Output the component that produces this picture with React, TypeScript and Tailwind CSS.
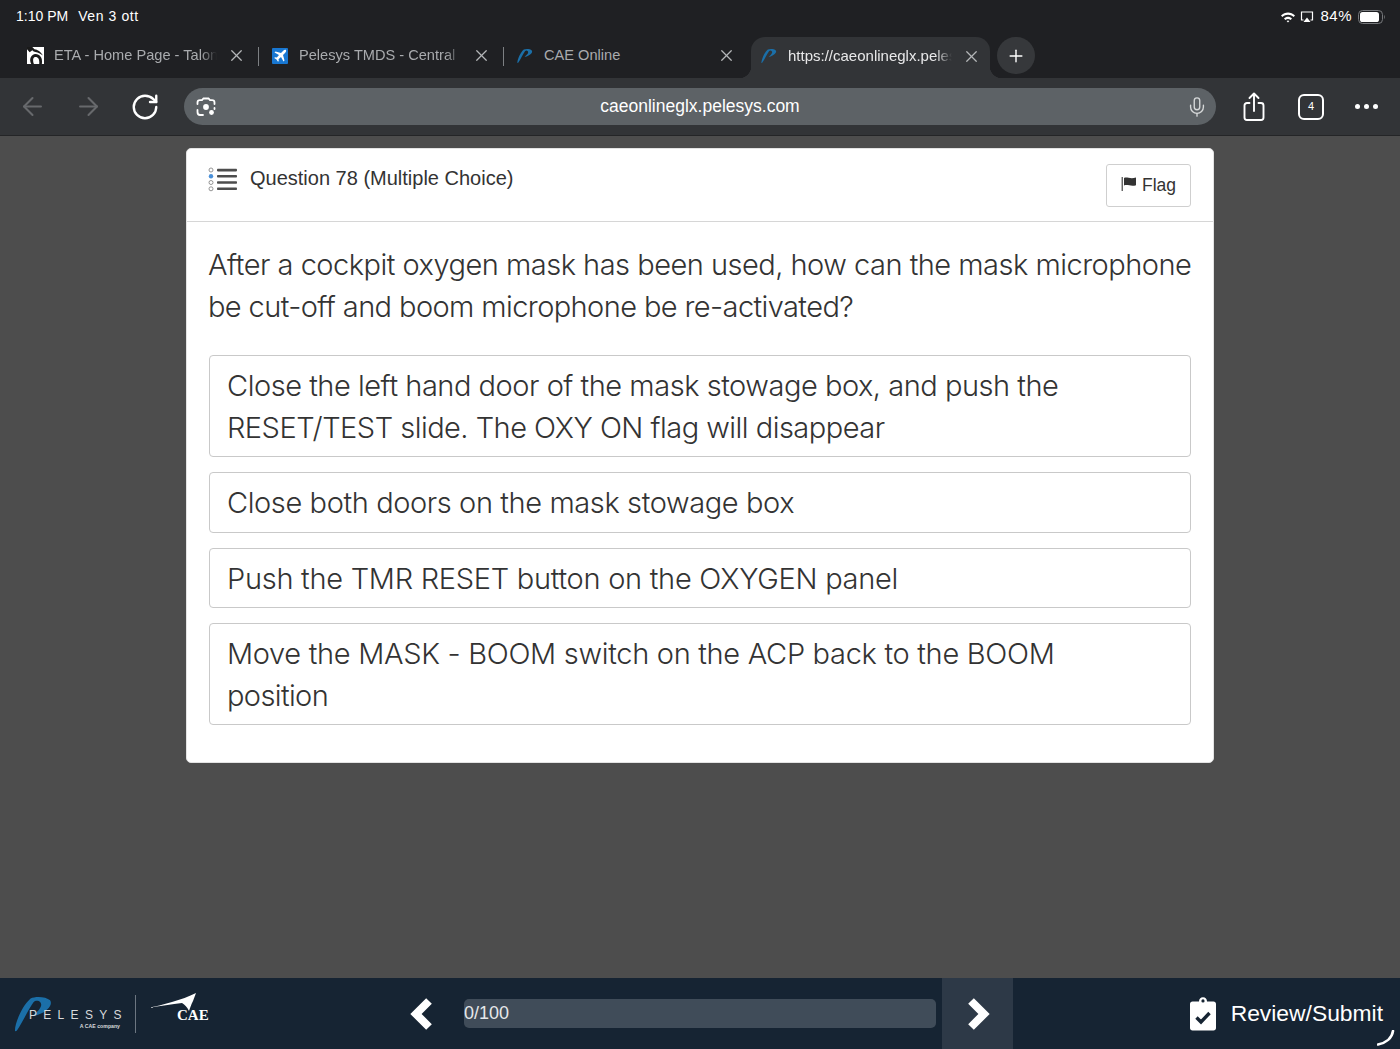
import { ArrowLeft, ArrowRight, Mic, Plus, RotateCw, X } from "lucide-react";

const sans = "font-['Liberation_Sans',Arial,sans-serif]";

function PelesysMark({ className }: { className?: string }) {
  return (
    <svg viewBox="0 0 40 36" className={className}>
      <path d="M1 35 C1 27 8 10 17 2 C22 -0.5 33 0 37 4 C40 8 35 15 24 19 C22 20 20 20 19 20 C25 15 30 10 27 6 C25 4 22 4 20 6 C15 13 9 26 3 35 C2 36 1 36 1 35 Z" fill="#1b6fa8" />
    </svg>
  );
}

function EtaIcon() {
  return (
    <svg viewBox="0 0 16 16" className="w-[17px] h-[17px] shrink-0">
      <rect width="16" height="16" fill="#fff" />
      <path d="M0 0 H5 L7 2 C10 2.5 13 4 15 8 L12 6 C9 4.5 6.5 5 5 3 L2.5 5 L0 2 Z" fill="#1a1a1a" />
      <path d="M4 16 C1.5 11 4 7 8 6.5 C12 6.5 15 10 14 16 H11.5 C12 12 10.5 9.5 8 9.5 C6 9.5 5 12 6.5 16 Z" fill="#1a1a1a" />
    </svg>
  );
}

function PlaneIcon() {
  return (
    <svg viewBox="0 0 16 16" className="w-4 h-4 shrink-0">
      <rect width="16" height="16" rx="1" fill="#1877d2" />
      <path d="M14 2 C13 1.6 12 2 11 3 L9 5 L3.5 3.5 L2.5 4.5 L7 7 L4.8 9.5 L3 9.2 L2.2 10 L4.5 11.5 L6 13.8 L6.8 13 L6.5 11.2 L9 9 L11.5 13.5 L12.5 12.5 L11 7 L13 5 C14 4 14.4 3 14 2 Z" fill="#fff" />
    </svg>
  );
}

function Tab({
  icon,
  title,
  fade,
  divider,
}: {
  icon: React.ReactNode;
  title: string;
  fade?: boolean;
  divider?: boolean;
}) {
  return (
    <div className="flex items-center w-[245px] h-[41px] pb-[3px] shrink-0">
      <div className="flex items-center flex-1 pl-[10px] min-w-0">
        <span className="w-[16px] flex justify-center shrink-0">{icon}</span>
        <span
          className={`ml-[11px] w-[163px] overflow-hidden whitespace-nowrap text-[14.6px] text-[#a9abae] ${fade ? "[mask-image:linear-gradient(to_right,black_90%,transparent)]" : ""}`}
        >
          {title}
        </span>
        <X className="w-[19px] h-[19px] ml-[10px] text-[#b4b6b8] shrink-0" strokeWidth={1.6} />
      </div>
      {divider && <div className="w-px h-[19px] bg-[#7d8083] mr-[3px] ml-[11px] shrink-0" />}
    </div>
  );
}

function Answer({ children }: { children: React.ReactNode }) {
  return (
    <div className="border border-[#c9c9c9] rounded-[4px] pl-[17px] pr-[18px] pt-[9px] pb-[8px] font-['Inter',sans-serif] text-[29px] leading-[41.5px] text-[#333] font-light whitespace-nowrap">
      {children}
    </div>
  );
}

export default function App() {
  return (
    <div className={`h-[1049px] w-[1400px] flex flex-col overflow-hidden bg-[#4d4d4d] ${sans}`}>
      {/* Status bar */}
      <div className="h-[37px] bg-[#1f2023] flex items-center justify-between pl-[16px] pr-[14px] pb-[4px] text-white text-[14px] shrink-0">
        <div className="flex gap-[10px]">
          <span>1:10 PM</span>
          <span className="tracking-[0.6px]">Ven 3 ott</span>
        </div>
        <div className="flex items-center">
          <svg viewBox="0 0 16 12" className="w-[16px] h-[12px]">
            <path d="M1 4.5 C5 0.6 11 0.6 15 4.5 L13.6 6 C10.4 3 5.6 3 2.4 6 Z M4 7.4 C6.4 5.3 9.6 5.3 12 7.4 L10.6 8.9 C9 7.6 7 7.6 5.4 8.9 Z M6.6 10 C7.5 9.3 8.5 9.3 9.4 10 L8 11.6 Z" fill="#fff" />
          </svg>
          <svg viewBox="0 0 14 12" className="w-[14px] h-[12px] ml-[4px]">
            <path d="M3.5 9 H1.5 V1 H12.5 V9 H10.5" fill="none" stroke="#fff" strokeWidth="1.2" />
            <path d="M7 6.5 L10.5 11 H3.5 Z" fill="#fff" />
          </svg>
          <span className="ml-[6px] text-[15px] tracking-[0.5px]">84%</span>
          <svg viewBox="0 0 28 14" className="w-[28px] h-[14px] ml-[6px]">
            <rect x="0.5" y="0.5" width="24" height="13" rx="4" fill="none" stroke="#77797c" />
            <rect x="2" y="2" width="19" height="10" rx="2.6" fill="#fff" />
            <path d="M26 5 C27 5.4 27 8.6 26 9 Z" fill="#77797c" />
          </svg>
        </div>
      </div>

      {/* Tab strip */}
      <div className="h-[41px] bg-[#1f2023] flex items-start pl-[17px] shrink-0">
        <Tab icon={<EtaIcon />} title="ETA - Home Page - Talon" fade divider />
        <Tab icon={<PlaneIcon />} title="Pelesys TMDS - Central" fade divider />
        <Tab icon={<PelesysMark className="w-4 h-4 shrink-0" />} title="CAE Online" />
        <div className="relative -ml-[1px] w-[239px] h-[41px] pb-[3px] bg-[#323437] rounded-t-[14px] flex items-center pl-[10px] shrink-0">
          <span className="absolute -left-[12px] bottom-0 w-[12px] h-[12px] bg-[radial-gradient(circle_at_0_0,transparent_12px,#323437_12.5px)]" />
          <span className="absolute -right-[12px] bottom-0 w-[12px] h-[12px] bg-[radial-gradient(circle_at_100%_0,transparent_12px,#323437_12.5px)]" />
          <PelesysMark className="w-4 h-4 shrink-0" />
          <span className="ml-[11px] w-[164px] overflow-hidden whitespace-nowrap text-[15px] text-[#e8e8e9] [mask-image:linear-gradient(to_right,black_90%,transparent)]">
            https://caeonlineglx.pelesys.com
          </span>
          <X className="w-[19px] h-[19px] ml-[10px] text-[#b4b6b8] shrink-0" strokeWidth={1.6} />
        </div>
        <div className="ml-[7px] w-[38px] h-[37px] rounded-full bg-[#36383b] flex items-center justify-center shrink-0">
          <Plus className="w-[20px] h-[20px] text-white" strokeWidth={1.7} />
        </div>
      </div>

      {/* Toolbar */}
      <div className="h-[58px] bg-[#323437] border-b border-[#242527] flex items-center pl-[18px] pr-[20px] shrink-0">
        <ArrowLeft className="w-[29px] h-[29px] text-[#67696c]" strokeWidth={1.7} />
        <ArrowRight className="w-[29px] h-[29px] ml-[27px] text-[#67696c]" strokeWidth={1.7} />
        <RotateCw className="w-[30px] h-[30px] ml-[27px] text-white" strokeWidth={1.9} />
        <div className="ml-[24px] w-[1032px] h-[37px] rounded-full bg-[#5d6266] flex items-center justify-between pl-[12px] pr-[8px]">
          <svg viewBox="0 0 20 20" className="w-[20px] h-[20px]" fill="none" stroke="#fff" strokeWidth="1.8" strokeLinecap="round">
            <path d="M1.5 7 V5.5 C1.5 4 2.6 3.2 4 3.2 H6 L7.5 1.5 H12.5 L14 3.2 H16 C17.4 3.2 18.5 4 18.5 5.5 V7" />
            <path d="M1.5 13 V15 C1.5 16.8 2.6 18 4 18 H7" />
            <path d="M18.5 11 V12" />
            <circle cx="10" cy="10" r="2.9" fill="#fff" stroke="none" />
            <circle cx="15.5" cy="15.5" r="2.4" fill="#fff" stroke="none" />
          </svg>
          <span className="mr-[2px] text-[17.5px] text-white">caeonlineglx.pelesys.com</span>
          <Mic className="w-[22px] h-[22px] text-[#d5d7d8]" strokeWidth={1.5} />
        </div>
        <svg viewBox="0 0 22 30" className="w-[22px] h-[30px] ml-[27px]" fill="none" stroke="#fff" strokeWidth="1.9" strokeLinecap="round" strokeLinejoin="round">
          <path d="M6.5 11 H4 C2.5 11 1.5 12 1.5 13.5 V25.5 C1.5 27 2.5 28 4 28 H18 C19.5 28 20.5 27 20.5 25.5 V13.5 C20.5 12 19.5 11 18 11 H15.5" />
          <path d="M11 19 V2 M6.5 6 L11 1.5 L15.5 6" />
        </svg>
        <div className="ml-[33px] w-[26px] h-[26px] border-2 border-white rounded-[6px] flex items-center justify-center text-[11px] text-white">
          4
        </div>
        <div className="ml-[31px] flex gap-[4px]">
          <span className="w-[5px] h-[5px] rounded-full bg-white" />
          <span className="w-[5px] h-[5px] rounded-full bg-white" />
          <span className="w-[5px] h-[5px] rounded-full bg-white" />
        </div>
      </div>

      {/* Page content */}
      <main className="flex-1 min-h-0 pt-[12px] flex justify-center">
        <div className="w-[1028px] h-[615px] bg-white rounded-[5px] border border-[#e3e3e3]">
          <div className="h-[73px] border-b border-[#d6d6d6] flex justify-between pl-[21px] pr-[22px]">
            <div className="flex items-start pt-[16px]">
              <svg viewBox="0 0 30 26" className="w-[30px] h-[26px] mt-[2px]">
                <g fill="none" stroke="#8a8a8a" strokeWidth="0.9">
                  <circle cx="3" cy="3" r="2" />
                  <circle cx="3" cy="15.5" r="2" />
                  <circle cx="3" cy="21.8" r="2" />
                </g>
                <circle cx="3" cy="9.2" r="2.2" fill="#4a90d9" />
                <g fill="#4d4d4d">
                  <rect x="9" y="1.8" width="20" height="2.6" rx="0.8" />
                  <rect x="9" y="8" width="20" height="2.6" rx="0.8" />
                  <rect x="9" y="14.2" width="20" height="2.6" rx="0.8" />
                  <rect x="9" y="20.4" width="20" height="2.6" rx="0.8" />
                </g>
              </svg>
              <span className="ml-[12px] text-[20px] leading-[26px] text-[#333]">Question 78 (Multiple Choice)</span>
            </div>
            <button className="mt-[15px] w-[85px] h-[43px] border border-[#cfcfcf] rounded-[3px] flex items-center justify-center text-[17.5px] text-[#333]">
              <svg viewBox="0 0 16 16" className="w-[16px] h-[16px] mr-[5px] -mt-[3px]">
                <path d="M1.2 1 V15" stroke="#333" strokeWidth="1.1" />
                <path d="M3 2 C6 0.5 9 3.6 15 1.6 V9.2 C10 11 6.5 8 3 9.6 Z" fill="#333" />
              </svg>
              Flag
            </button>
          </div>
          <div className="pt-[22px] px-[22px]">
            <p className="-ml-[1px] whitespace-nowrap font-['Inter',sans-serif] text-[29px] leading-[41.5px] text-[#333] font-light">
              <span className="tracking-[-0.51px]">After a cockpit oxygen mask has been used, how can the mask microphone</span>
              <br />
              <span className="tracking-[-0.6px]">be cut-off and boom microphone be re-activated?</span>
            </p>
            <div className="mt-[28px] flex flex-col gap-[15px]">
              <Answer>
                <span className="tracking-[-0.475px]">Close the left hand door of the mask stowage box, and push the</span>
                <br />
                <span className="tracking-[-0.52px]">RESET/TEST slide. The OXY ON flag will disappear</span>
              </Answer>
              <Answer>
                <span className="tracking-[-0.4px]">Close both doors on the mask stowage box</span>
              </Answer>
              <Answer>
                <span className="tracking-[-0.28px]">Push the TMR RESET button on the OXYGEN panel</span>
              </Answer>
              <Answer>
                <span className="tracking-[-0.31px]">Move the MASK - BOOM switch on the ACP back to the BOOM</span>
                <br />
                <span className="tracking-[-0.62px]">position</span>
              </Answer>
            </div>
          </div>
        </div>
      </main>

      {/* Footer */}
      <footer className="h-[71px] bg-[#162433] flex items-stretch shrink-0 relative">
        <div className="w-[400px] flex items-center pl-[14px] shrink-0">
          <div className="relative w-[108px] h-[36px] shrink-0">
            <PelesysMark className="absolute left-0 top-0 w-[39px] h-[36px]" />
            <div className="absolute left-[15px] top-[12px] text-[12px] leading-[14px] tracking-[6.3px] text-[#d8dadc] whitespace-nowrap">PELESYS</div>
            <div className="absolute right-[2px] top-[27px] text-[5.2px] leading-[7px] font-bold text-[#d8dadc] whitespace-nowrap">A CAE company</div>
          </div>
          <div className="ml-[13px] w-px h-[38px] bg-[#6c7681]" />
          <div className="relative ml-[13px] w-[62px] h-[40px]">
            <svg viewBox="0 0 50 18" className="absolute -left-[1px] -top-[1px] w-[50px] h-[18px]">
              <path d="M0 15 C14 12 34 7 48 0 L45 8 C43 12 42 15 41 18 C39 14 37 12 34 10 C24 11 12 13 0 15 Z" fill="#fff" />
            </svg>
            <span className="absolute left-[28px] top-[13px] text-[15px] leading-[16px] font-bold text-white font-['Liberation_Serif',serif]">CAE</span>
          </div>
        </div>
        <div className="w-[49px] flex items-center justify-center shrink-0">
          <svg viewBox="0 0 24 32" className="w-[24px] h-[32px] -ml-[7px]">
            <path d="M20 3 L7 16 L20 29" fill="none" stroke="#fff" strokeWidth="8" />
          </svg>
        </div>
        <div className="flex items-center w-[472px] ml-[15px] shrink-0">
          <div className="w-full h-[29px] rounded-[5px] bg-[#404c59] flex items-center text-[18px] text-[#e6e8ea]">0/100</div>
        </div>
        <div className="w-[71px] ml-[6px] bg-[#2d3947] flex items-center justify-center shrink-0">
          <svg viewBox="0 0 24 32" className="w-[24px] h-[32px] ml-[2px]">
            <path d="M4 3 L17 16 L4 29" fill="none" stroke="#fff" strokeWidth="8" />
          </svg>
        </div>
        <div className="flex-1 flex items-center justify-end pr-[17px]">
          <svg viewBox="0 0 26 34" className="w-[26px] h-[35px]">
            <path d="M2.5 5 H9 C9 2.5 10.5 0.8 13 0.8 C15.5 0.8 17 2.5 17 5 H23.5 C25 5 26 6 26 7.5 V31.5 C26 33 25 34 23.5 34 H2.5 C1 34 0 33 0 31.5 V7.5 C0 6 1 5 2.5 5 Z" fill="#fff" />
            <circle cx="13" cy="4.4" r="1.6" fill="#162433" />
            <path d="M6.5 21 L11 25.5 L19.5 16.5" fill="none" stroke="#162433" strokeWidth="3.4" />
          </svg>
          <span className="ml-[15px] text-[22.85px] text-white">Review/Submit</span>
        </div>
        <svg viewBox="0 0 18 16" className="absolute right-[5px] bottom-[3px] w-[18px] h-[16px]">
          <path d="M16 1 C15 8 9 13 1 14.5" fill="none" stroke="#fff" strokeWidth="2.6" strokeLinecap="round" />
        </svg>
      </footer>
    </div>
  );
}
